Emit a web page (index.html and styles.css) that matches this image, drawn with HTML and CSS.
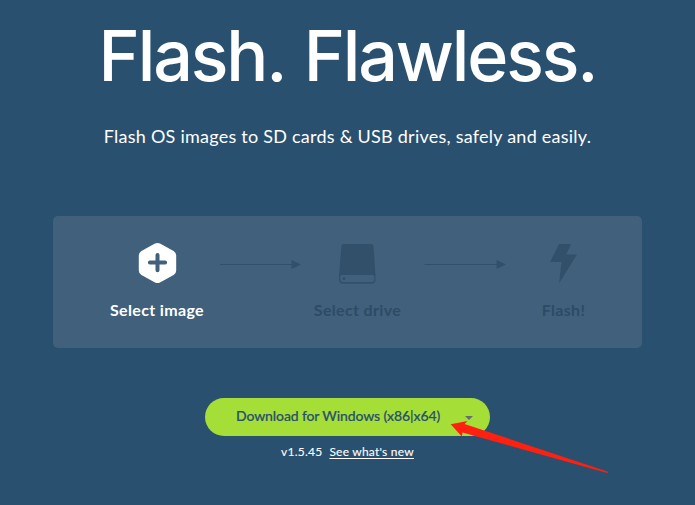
FILE: index.html
```html
<!DOCTYPE html>
<html lang="en">
<head>
<meta charset="utf-8">
<title>Flash. Flawless.</title>
<link rel="stylesheet" href="styles.css">
</head>
<body>
<main class="hero">
  <h1 class="title">Flash. Flawless.</h1>
  <p class="subtitle">Flash OS images to SD cards &amp; USB drives, safely and easily.</p>
  <section class="steps">
    <div class="step active">
      <svg class="icon" width="40" height="42" viewBox="0 0 40 42"><path fill="#fff" d="M18 1.600Q20.500 .2 23 1.600L36.600 9Q39.200 10.500 39.200 13.500V28.500Q39.200 31.500 36.600 33L23 40.400Q20.500 41.800 18 40.400L4.400 33Q1.800 31.500 1.800 28.500V13.500Q1.800 10.500 4.400 9Z"/><path d="M20.500 13V28.200M12.900 20.600H28.100" stroke="#41607c" stroke-width="4" stroke-linecap="round"/></svg>
      <span class="label">Select image</span>
    </div>
    <svg class="arrow" width="81" height="12" viewBox="0 0 81 12"><path d="M0 6.500H73" stroke="#325069"/><path fill="#325069" d="M71.500 2L81 6.500L71.500 11Z"/></svg>
    <div class="step">
      <svg class="icon" width="40" height="42" viewBox="0 0 40 42"><path fill="#325069" d="M5.500 2H33.500Q35.300 2 35.500 4L37.500 34V37.500Q37.500 41.800 33.500 41.800H5Q1 41.800 1 37.500V34L3.400 4Q3.500 2 5.500 2Z"/><path fill="#41607c" d="M4 33H34.500Q36.300 33 36.300 34.500V37Q36.300 40 34 40H4.700Q2.300 40 2.300 37V34.500Q2.300 33 4 33Z"/><circle cx="6" cy="36.500" r="1.500" fill="#325069"/></svg>
      <span class="label">Select drive</span>
    </div>
    <svg class="arrow second" width="82" height="12" viewBox="0 0 82 12"><path d="M.5 6.500H73" stroke="#325069"/><path fill="#325069" d="M72.500 2L82 6.500L72.500 11Z"/></svg>
    <div class="step">
      <svg class="icon" width="40" height="42" viewBox="0 0 40 42"><path fill="#325069" d="M15 2H27L22.300 12.500H33L15 41.500L17.500 20H6Z"/></svg>
      <span class="label">Flash!</span>
    </div>
  </section>
  <div class="download">
    <span class="download-text">Download for Windows (x86|x64)</span>
    <span class="caret"></span>
  </div>
  <div class="release"><span class="version">v1.5.45</span><a class="news" href="#">See what's new</a></div>
  <svg class="pointer" width="160" height="66" viewBox="0 0 160 66"><path fill="#ff2010" d="M.7 13.300L17.500 10L14.500 13L158 60.700L157.300 62L12.500 21.500L11.800 25.500Z"/></svg>
</main>
</body>
</html>
```
FILE: styles.css
```css
* { box-sizing: border-box; }
body {
  margin: 0;
  background: #2a506f;
  color: #fff;
  font-family: Lato, "Noto Sans", sans-serif;
}
.hero {
  position: relative;
  height: 505px;
  overflow: hidden;
  display: flex;
  flex-direction: column;
  align-items: center;
}
.title {
  margin: 13px 0 0;
  font: 500 70px/86px Inter, sans-serif;
  letter-spacing: -2.15px;
  word-spacing: 2.5px;
  white-space: nowrap;
}
.subtitle {
  margin: 25px 0 0;
  font-size: 18px;
  line-height: 24px;
  white-space: nowrap;
  letter-spacing: 0.24px;
}
.steps {
  margin-top: 68px;
  width: 589px;
  height: 132px;
  padding: 26px 20px 0 41px;
  border-radius: 5px;
  background: #41607c;
  display: grid;
  grid-template-columns: 126px 81px 113px 91px 117px;
  align-items: start;
}
.step {
  display: flex;
  flex-direction: column;
  align-items: center;
  color: #2e4b65;
}
.step.active { color: #fff; }
.label {
  margin-top: 16px;
  font-size: 16px;
  line-height: 20px;
  font-weight: 700;
  letter-spacing: 0.35px;
  white-space: nowrap;
}
.arrow { margin-top: 16px; }
.arrow.second { margin-left: 10px; }
.download {
  margin-top: 50px;
  width: 285px;
  height: 38px;
  padding: 0 17px 4px 31px;
  border-radius: 19px;
  background: #a5de37;
  color: #2a506f;
  display: flex;
  align-items: center;
  justify-content: space-between;
  font-size: 14px;
  font-weight: 500;
  letter-spacing: -0.12px;
  -webkit-text-stroke: 0.2px #2a506f;
  white-space: nowrap;
}
.caret {
  margin-top: 6px;
  border: 4px solid transparent;
  border-top-color: #666c73;
  border-bottom: 0;
}
.release {
  display: flex;
  gap: 7px;
  margin-top: 8px;
  font-size: 12px;
  line-height: 16px;
  letter-spacing: 0.23px;
  -webkit-text-stroke: 0.1px #fff;
  white-space: nowrap;
}
.news { color: #fff; text-underline-offset: 2px; }
.pointer {
  position: absolute;
  left: 450px;
  top: 411px;
}
```
